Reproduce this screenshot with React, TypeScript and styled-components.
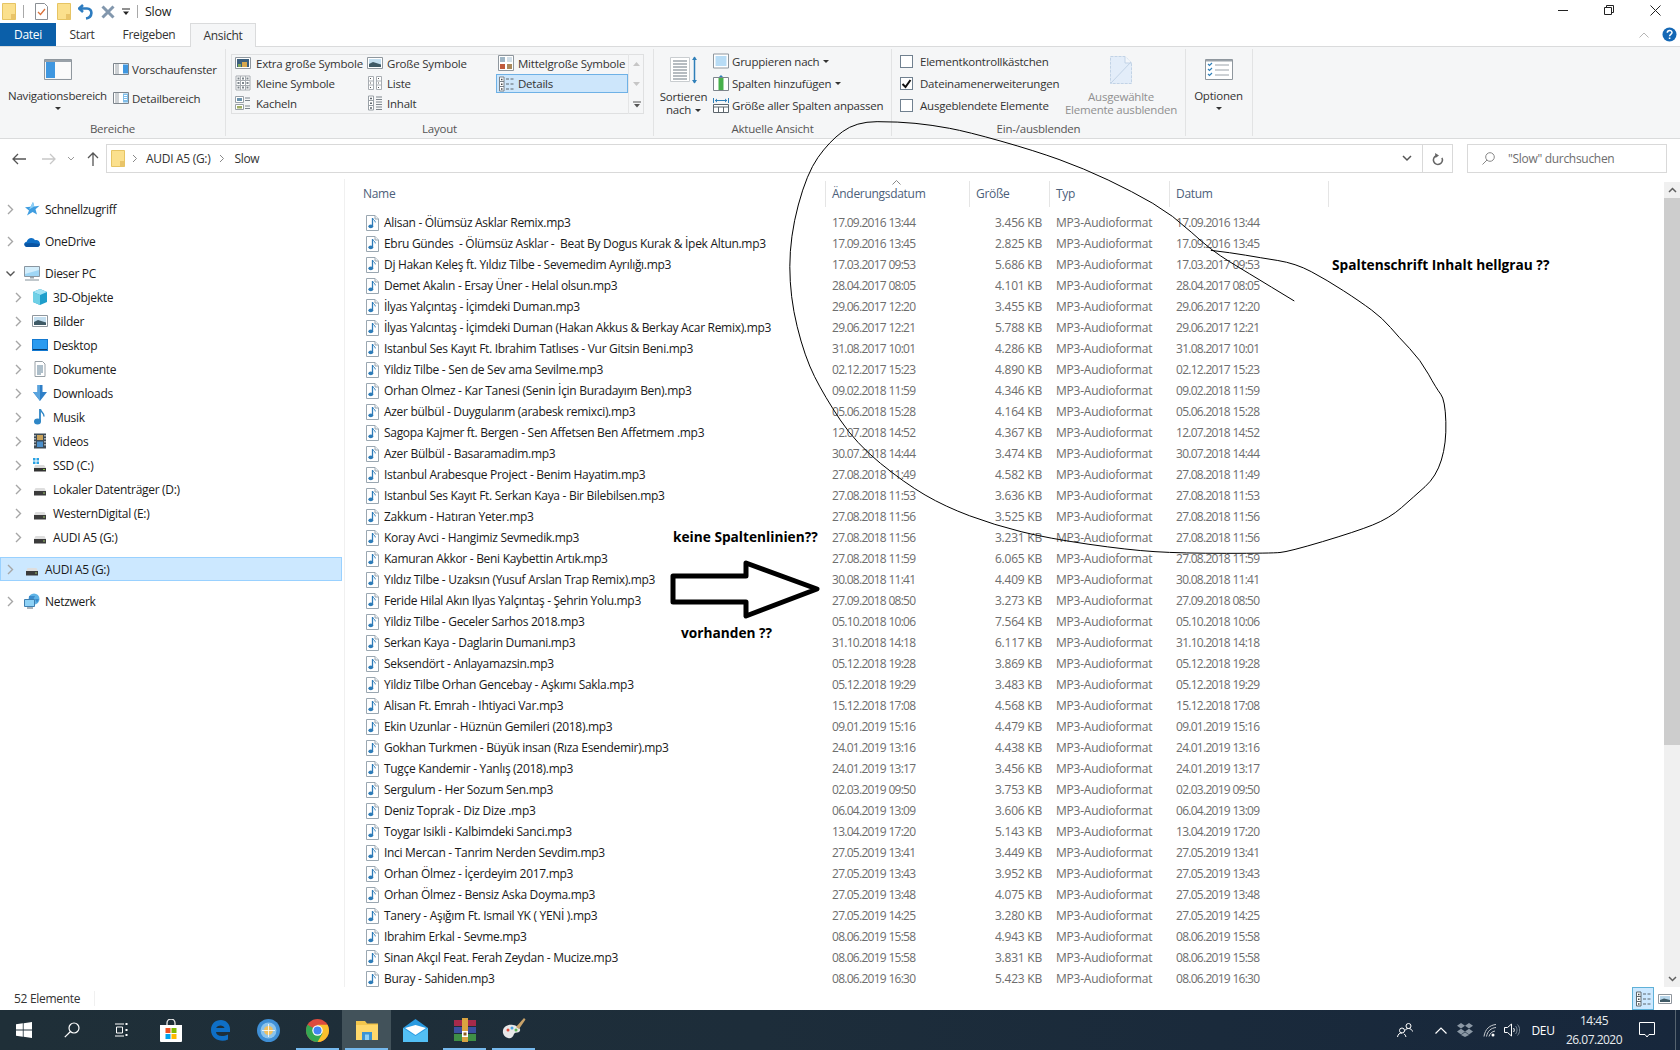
import React from "react";
import styled, { createGlobalStyle } from "styled-components";

const GlobalStyle = createGlobalStyle`
  html, body { margin: 0; padding: 0; background: #fff; }
  body { font-family: "Open Sans", "Noto Sans", sans-serif; font-size: 12px; letter-spacing: -0.3px; color: #1a1a1a; }
  * { box-sizing: border-box; }
`;

const Root = styled.div`
  position: relative; width: 1680px; height: 1050px; overflow: hidden;
  display: flex; flex-direction: column; background: #fff;
`;
const TitleBar = styled.div`display: flex; align-items: center; height: 23px; flex: none;`;
const QuickIcons = styled.div`display: flex; align-items: center; padding-left: 2px; height: 23px;`;
const QuickSep = styled.span<{ $l: number; $r: number }>`
  width: 1px; height: 13px; background: #a8a8a8; margin: 0 ${p => p.$r}px 0 ${p => p.$l}px;
`;
const QuickGap = styled.span<{ $w: number }>`width: ${p => p.$w}px; flex: none;`;
const TitleText = styled.span`font-size: 12.5px; line-height: 16px;`;
const WindowButtons = styled.div`margin-left: auto; display: flex; padding-right: 2px; margin-top: -3px;`;
const WindowButton = styled.div`width: 46px; height: 20px; display: flex; align-items: center; justify-content: center;`;

const TabRow = styled.div`display: flex; height: 23px; flex: none; align-items: stretch; position: relative; z-index: 1;`;
const FileTab = styled.div`
  width: 56px; background: #0b5fa9; color: #fff; display: flex; align-items: center; justify-content: center;
`;
const Tab = styled.div<{ $w: number; $active?: boolean }>`
  width: ${p => p.$w}px; display: flex; align-items: center; justify-content: center; color: #333;
  ${p => p.$active && `background: #f5f6f7; border: 1px solid #dadbdc; border-bottom: 0; margin-bottom: -1px;`}
`;
const TabRight = styled.div`margin-left: auto; display: flex; align-items: center; gap: 13px; padding-right: 3px;`;

const Ribbon = styled.div`
  display: flex; height: 93px; flex: none; background: #f5f6f7; font-size: 11.5px; letter-spacing: -0.22px;
  border-top: 1px solid #dadbdc; border-bottom: 1px solid #dadbdc;
`;
const Group = styled.div<{ $w: number }>`
  position: relative; width: ${p => p.$w}px; flex: none; display: flex; flex-direction: column;
  margin-top: 2px; margin-bottom: 2px;
  border-right: 1px solid #e2e3e4;
`;
const GroupBody = styled.div`flex: none; height: 73px; display: flex; align-items: flex-start;`;
const GroupLabel = styled.div`height: 14px; line-height: 14px; text-align: center; color: #555;`;
const BigCol = styled.div<{ $w: number; $top: number; $pl?: number }>`
  width: ${p => p.$w}px; flex: none; padding-top: ${p => p.$top}px; padding-left: ${p => p.$pl ?? 0}px;
  display: flex; flex-direction: column; align-items: center; white-space: nowrap; line-height: 13px;
`;
const BigText = styled.div<{ $off?: number; $muted?: boolean }>`
  margin-top: ${p => p.$off ?? 0}px; text-align: center; color: ${p => (p.$muted ? "#909090" : "#333")};
`;
const Caret = styled.span`
  display: inline-block; width: 0; height: 0; border-left: 3px solid transparent; border-right: 3px solid transparent;
  border-top: 3px solid #333; vertical-align: middle; margin-left: 4px;
`;
const BlockCaret = styled(Caret)`margin: 5px 0 0;`;
const RowCaret = styled(Caret)`margin-left: 1px;`;
const PaneCol = styled.div`display: flex; flex-direction: column; gap: 9px; padding-top: 10px; margin-left: 0;`;
const PaneRow = styled.div`display: flex; align-items: center; height: 20px; gap: 3px; white-space: nowrap; color: #333;`;
const Gallery = styled.div`
  margin: 5px 0 0 5px; width: 413px; height: 60px; padding-left: 2px;
  display: grid; grid-template-columns: 132px 131px 132px 16px; grid-auto-rows: 20px;
  box-shadow: inset 0 0 0 1px #dfe0e1;
`;
const GalleryItem = styled.div<{ $active?: boolean; $first?: boolean }>`
  display: flex; align-items: center; gap: ${p => (p.$first ? 5 : 4)}px; padding-left: 2px; padding-bottom: 2px;
  white-space: nowrap; color: #333; height: 20px;
  ${p => p.$active && `background: #cde6fb; border: 1px solid #6eb1e6; padding-left: 1px; padding-bottom: 0; height: 19px;`}
`;
const GalleryScroll = styled.div`
  grid-column: 4; grid-row: 1 / span 3; border-left: 1px solid #e4e5e6;
  display: grid; grid-template-rows: repeat(3, 20px); justify-items: center; align-items: center;
`;
const RowStack = styled.div<{ $pl?: number; $w?: number }>`
  display: flex; flex-direction: column; padding-top: 1px; padding-left: ${p => p.$pl ?? 0}px; flex: none;
  ${p => p.$w && `width: ${p.$w}px;`}
`;
const StackRow = styled.div<{ $gap: number }>`
  display: flex; align-items: center; height: 22px; gap: ${p => p.$gap}px; white-space: nowrap; color: #333;
`;
const Checkbox = styled.span`
  width: 13px; height: 13px; border: 1px solid #70808f; background: #fff; flex: none; display: flex;
  align-items: center; justify-content: center;
`;

const AddressRow = styled.div`
  height: 40px; flex: none; padding-top: 5px; display: flex; align-items: flex-start; position: relative;
`;
const NavArrows = styled.div`width: 106px; height: 29px; flex: none; display: flex; align-items: center; padding-left: 12px;`;
const AddressBox = styled.div`
  width: 1347px; height: 29px; flex: none; border: 1px solid #d9d9d9; display: flex; align-items: center; padding-left: 4px;
`;
const Crumb = styled.span`color: #333;`;
const CrumbSep = styled.span<{ $l: number; $r: number }>`display: flex; margin: 0 ${p => p.$r}px 0 ${p => p.$l}px;`;
const AddressRight = styled.div`margin-left: auto; display: flex; align-items: center; height: 100%;`;
const DropZone = styled.div`width: 30px; display: flex; justify-content: center;`;
const RefreshZone = styled.div`width: 30px; height: 100%; border-left: 1px solid #d9d9d9; display: flex; align-items: center; justify-content: center;`;
const SearchBox = styled.div`
  width: 200px; height: 29px; margin-left: 14px; flex: none; border: 1px solid #d9d9d9; display: flex; align-items: center;
  padding-left: 14px; gap: 13px; color: #6d6d6d;
`;

const Main = styled.div`flex: 1; display: flex; min-height: 0;`;
const Sidebar = styled.div`width: 345px; flex: none; border-right: 1px solid #f0f0f0; padding-top: 18px;`;
const TreeRow = styled.div<{ $level: number; $top?: number; $sel?: boolean }>`
  display: flex; align-items: center; height: 24px; margin-top: ${p => p.$top ?? 0}px; white-space: nowrap;
  padding-left: ${p => 6 + 8 * p.$level}px; width: 342px; color: #1a1a1a;
  ${p => p.$sel && `background: #cce8ff; box-shadow: inset 0 0 0 1px #99d1ff;`}
`;
const TreeChevron = styled.span`width: 9px; margin-right: 9px; display: flex; flex: none;`;
const TreeIcon = styled.span`width: 16px; height: 16px; margin-right: 5px; display: flex; flex: none;`;

const ListArea = styled.div`flex: 1; min-width: 0; padding-top: 2px; overflow: hidden;`;
const HeaderRow = styled.div`display: grid; grid-template-columns: 480px 144px 80px 120px 160px; height: 24px; margin-bottom: 7px; position: relative;`;
const HeaderCell = styled.div<{ $pl: number; $line?: boolean }>`
  position: relative; padding-left: ${p => p.$pl}px; line-height: 26px; color: #4c607a;
  ${p => p.$line && `border-left: 1px solid #e5e5e5;`}
  &:last-child { border-right: 1px solid #e5e5e5; }
`;
const SortMark = styled.span`position: absolute; left: 66px; top: -1px; display: flex;`;
const FileRow = styled.div`display: grid; grid-template-columns: 480px 144px 80px 120px 160px; height: 21px; align-items: center; white-space: pre;`;
const NameCell = styled.div`display: flex; align-items: center; padding-left: 21px; gap: 5px; color: #1a1a1a;`;
const MetaCell = styled.div<{ $right?: boolean }>`
  color: #6d6d6d; padding-left: ${p => (p.$right ? 0 : 7)}px; padding-right: ${p => (p.$right ? 7 : 0)}px;
  text-align: ${p => (p.$right ? "right" : "left")}; letter-spacing: -0.22px;
`;
const DateCell = styled(MetaCell)`letter-spacing: -0.72px;`;
const ScrollBar = styled.div`
  width: 16px; flex: none; margin-top: 3px; background: #f0f0f0; display: flex; flex-direction: column; align-items: center;
`;
const ScrollBtn = styled.div`height: 16px; display: flex; align-items: center; justify-content: center; flex: none;`;
const Thumb = styled.div`width: 16px; height: 547px; background: #cdcdcd; flex: none;`;
const Spacer = styled.div`flex: 1;`;

const StatusBar = styled.div`height: 23px; flex: none; display: flex; align-items: center; padding-left: 14px; position: relative; color: #333;`;
const StatusSep = styled.span`width: 1px; height: 15px; background: #f0f0f0; margin-left: 14px;`;
const ViewSwitch = styled.div`margin-left: auto; margin-right: 7px; display: flex; align-items: center; gap: 3px; height: 23px;`;
const ViewBtn = styled.div<{ $active?: boolean }>`
  width: ${p => (p.$active ? 22 : 16)}px; height: 23px; display: flex; align-items: center; justify-content: center;
  ${p => p.$active && `background: #cce8ff; border: 1px solid #5fb1d8;`}
`;

const Taskbar = styled.div`
  height: 40px; flex: none; display: flex; align-items: stretch; color: #fff;
  background: linear-gradient(90deg, #1f2f38 0%, #1d2d3a 45%, #17273c 100%);
`;
const TaskSlot = styled.div<{ $w: number; $open?: boolean; $active?: boolean }>`
  width: ${p => p.$w}px; flex: none; position: relative; display: flex; align-items: center; justify-content: center;
  ${p => p.$active && `background: #42525a;`}
  ${p => p.$open && `&::after { content: ""; position: absolute; left: 3px; right: 3px; bottom: 0; height: 2px; background: #76b9ed; }`}
`;
const Tray = styled.div`margin-left: auto; display: flex; align-items: center; position: relative;`;
const TrayItem = styled.div<{ $w: number; $pl?: number; $end?: boolean }>`
  width: ${p => p.$w}px; flex: none; display: flex; align-items: center; height: 40px;
  padding-left: ${p => p.$pl ?? 0}px; justify-content: ${p => (p.$end ? "flex-end" : "center")};
`;
const Clock = styled.div`width: 72px; text-align: center; line-height: 19px; font-size: 12px; letter-spacing: -0.5px; color: #e8ecef; white-space: nowrap;`;

const Overlay = styled.svg`position: absolute; left: 0; top: 0; pointer-events: none;`;
const Note = styled.div<{ $x: number; $y: number }>`
  position: absolute; left: ${p => p.$x}px; top: ${p => p.$y}px; font-weight: 700; font-size: 13.7px; line-height: 18px;
  letter-spacing: 0; color: #000; white-space: nowrap;
`;

type IP = { w?: number; h?: number; children?: React.ReactNode };
const I = ({ w = 16, h = 16, children }: IP) => (
  <svg width={w} height={h} viewBox={`0 0 ${w} ${h}`} style={{ flex: "none", display: "block" }}>{children}</svg>
);

const FolderSmall = () => (
  <I w={14} h={17}><path d="M.5.5h13v16H.5z" fill="#fbe08d" stroke="#e6c463" /><path d="M9 11h4.5v5.5H9z" fill="#e9c469" /></I>
);
const MusicFile = () => (
  <I w={13} h={16}>
    <path d="M.5.5h8.5l3.5 3.5v11.5H.5z" fill="#fff" stroke="#9aa7b1" />
    <path d="M9 .5V4h3.5" fill="#eef2f5" stroke="#9aa7b1" />
    <path d="M6.5 3v8" stroke="#2e7cb8" strokeWidth="1.3" />
    <path d="M6.7 3.4c.6 1.6 2.6 2 2.6 4" stroke="#2e7cb8" fill="none" />
    <ellipse cx="4.8" cy="11.3" rx="2.4" ry="1.9" fill="#2e7cb8" />
  </I>
);
const ChevR = ({ c = "#a6a6a6" }: { c?: string }) => (
  <I w={9} h={11}><path d="M2 1l4.5 4.5L2 10" fill="none" stroke={c} strokeWidth="1.4" /></I>
);
const ChevD = () => <I w={10} h={9}><path d="M1 2l4 4 4-4" fill="none" stroke="#555" strokeWidth="1.5" /></I>;

const S = {
  star: <I><path d="M9 1l1.3 4.4 5.2-.6-4 3.4 1.5 5.3-4.4-2.6-5.6 3.5 2-5L1 6.3l5.6-.6z" fill="#3f9de0" /><path d="M9 1l1.3 4.4-4.7 2.8-.6 0L6.6 5.7z" fill="#8fd0f7" /></I>,
  cloud: <I><path d="M3 14c-3.5 0-3.6-5-.3-5.3C3.5 4.800 9 3.500 11 7.200c2.800-.7 5 1.300 4.900 3.500 0 2-1.300 3.300-3 3.300z" fill="#0f6fc6" /><path d="M3 14c-2-.5-2.800-2-2.500-3.500L8 10l7.900 1c0 2-1.300 3-3 3z" fill="#0a54a2" /></I>,
  pc: <I><path d="M.5 1.500h15v10H.5z" fill="#9fd6f5" stroke="#8a96a0" /><path d="M1 2h14v3L1 9z" fill="#d3eefc" /><path d="M6 12h4v1.500H6z" fill="#9aa6ae" /><path d="M1 15h14" stroke="#a7b0b7" strokeWidth="1.400" /></I>,
  cube: <I><path d="M8 0l7 3v10l-7 3-7-3V3z" fill="#1e9ecb" /><path d="M8 0l7 3-7 3-7-3z" fill="#a2e3f4" /><path d="M1 3l7 3v10l-7-3z" fill="#6fd0e6" /></I>,
  pic: <I><path d="M.5 2.500h15v11H.5z" fill="#fff" stroke="#8f979e" /><path d="M2 4h12v8H2z" fill="#c4dff0" /><path d="M2 9l4-2 8 2.500V12H2z" fill="#3f5a66" /></I>,
  desk: <I><path d="M0 2h16v12H0z" fill="#1379d0" /><path d="M1 3h14v9.500H1z" fill="#2b9bf0" /><path d="M1 12.500h14" stroke="#0a3c6e" /></I>,
  doc: <I><path d="M3 .5h7.500L13 3v12.500H3z" fill="#fff" stroke="#98a0a6" /><path d="M5 5h6M5 7h6M5 9h6M5 11h6M5 13h4" stroke="#5d7f95" /></I>,
  dl: <I><path d="M5.500 0h5v7H15l-7 9-7-9h4.500z" fill="#2f7fc7" /><path d="M5.500 0h2.500v16l-7-9h4.500z" fill="#5aa4de" /></I>,
  music: <I><path d="M8 0v12" stroke="#2e86c6" strokeWidth="1.800" /><path d="M8.500.5c.6 3 4 3.400 3.500 7" fill="none" stroke="#2e86c6" strokeWidth="1.400" /><ellipse cx="5.500" cy="12.500" rx="3.500" ry="3" fill="#2e86c6" /></I>,
  film: <I><path d="M2 .5h12v15H2z" fill="#3d4a55" /><path d="M5 2h6v5H5z" fill="#c9a25a" /><path d="M5 8.500h6V14H5z" fill="#4b8fcb" /><path d="M3 2v12M13 2v12" stroke="#dfe4e8" strokeDasharray="1.500 1.500" strokeWidth="1.300" /></I>,
  sys: <I><path d="M1 1h2.500v2.500H1zM4.500 1H7v2.500H4.500zM1 4.500h2.500V7H1zM4.500 4.500H7V7H4.500z" fill="#2aa2e3" /><path d="M2 11l1-3h9l2 3z" fill="#dcdcdc" /><path d="M2 11h12v3.500H2z" fill="#333" /><path d="M11 12h2v1h-2z" fill="#7dc242" /></I>,
  drive: <I><path d="M2 10l1.500-3h9L14 10z" fill="#dedede" /><path d="M2 10h12v4.500H2z" fill="#3b3b3b" /><path d="M11 11.500h2v1h-2z" fill="#9cc46a" /></I>,
  net: <I><circle cx="10" cy="6" r="5.500" fill="#5fb3e6" /><path d="M5 3h6l-2 4H5zM11 6h4l-2 4z" fill="#3b8ccc" /><path d="M.5 6.500h10v7H.5z" fill="#8fd2f6" stroke="#3f7fb0" /><path d="M3 15h6" stroke="#8b99a3" strokeWidth="1.500" /></I>,
};

const treeItems = [
  { l: 0, t: "Schnellzugriff", i: S.star },
  { l: 0, top: 8, t: "OneDrive", i: S.cloud },
  { l: 0, top: 8, t: "Dieser PC", i: S.pc, open: true },
  { l: 1, t: "3D-Objekte", i: S.cube },
  { l: 1, t: "Bilder", i: S.pic },
  { l: 1, t: "Desktop", i: S.desk },
  { l: 1, t: "Dokumente", i: S.doc },
  { l: 1, t: "Downloads", i: S.dl },
  { l: 1, t: "Musik", i: S.music },
  { l: 1, t: "Videos", i: S.film },
  { l: 1, t: "SSD (C:)", i: S.sys },
  { l: 1, t: "Lokaler Datenträger (D:)", i: S.drive },
  { l: 1, t: "WesternDigital (E:)", i: S.drive },
  { l: 1, t: "AUDI A5 (G:)", i: S.drive },
  { l: 0, top: 8, t: "AUDI A5 (G:)", i: S.drive, sel: true },
  { l: 0, top: 8, t: "Netzwerk", i: S.net },
];

const files: [string, string, string][] = [
  ["Alisan - Ölümsüz Asklar Remix.mp3", "17.09.2016 13:44", "3.456"],
  ["Ebru Gündes  - Ölümsüz Asklar -  Beat By Dogus Kurak & İpek Altun.mp3", "17.09.2016 13:45", "2.825"],
  ["Dj Hakan Keleş ft. Yıldız Tilbe - Sevemedim Ayrılığı.mp3", "17.03.2017 09:53", "5.686"],
  ["Demet Akalın - Ersay Üner - Helal olsun.mp3", "28.04.2017 08:05", "4.101"],
  ["İlyas Yalçıntaş - İçimdeki Duman.mp3", "29.06.2017 12:20", "3.455"],
  ["İlyas Yalcıntaş - İçimdeki Duman (Hakan Akkus & Berkay Acar Remix).mp3", "29.06.2017 12:21", "5.788"],
  ["Istanbul Ses Kayıt Ft. Ibrahim Tatlıses - Vur Gitsin Beni.mp3", "31.08.2017 10:01", "4.286"],
  ["Yildiz Tilbe - Sen de Sev ama Sevilme.mp3", "02.12.2017 15:23", "4.890"],
  ["Orhan Olmez - Kar Tanesi (Senin İçin Buradayım Ben).mp3", "09.02.2018 11:59", "4.346"],
  ["Azer bülbül - Duygularım (arabesk remixci).mp3", "05.06.2018 15:28", "4.164"],
  ["Sagopa Kajmer ft. Bergen - Sen Affetsen Ben Affetmem .mp3", "12.07.2018 14:52", "4.367"],
  ["Azer Bülbül - Basaramadim.mp3", "30.07.2018 14:44", "3.474"],
  ["Istanbul Arabesque Project - Benim Hayatim.mp3", "27.08.2018 11:49", "4.582"],
  ["Istanbul Ses Kayıt Ft. Serkan Kaya - Bir Bilebilsen.mp3", "27.08.2018 11:53", "3.636"],
  ["Zakkum - Hatıran Yeter.mp3", "27.08.2018 11:56", "3.525"],
  ["Koray Avci - Hangimiz Sevmedik.mp3", "27.08.2018 11:56", "3.231"],
  ["Kamuran Akkor - Beni Kaybettin Artık.mp3", "27.08.2018 11:59", "6.065"],
  ["Yıldız Tilbe - Uzaksın (Yusuf Arslan Trap Remix).mp3", "30.08.2018 11:41", "4.409"],
  ["Feride Hilal Akın Ilyas Yalçıntaş - Şehrin Yolu.mp3", "27.09.2018 08:50", "3.273"],
  ["Yildiz Tilbe - Geceler Sarhos 2018.mp3", "05.10.2018 10:06", "7.564"],
  ["Serkan Kaya - Daglarin Dumani.mp3", "31.10.2018 14:18", "6.117"],
  ["Seksendört - Anlayamazsin.mp3", "05.12.2018 19:28", "3.869"],
  ["Yildiz Tilbe Orhan Gencebay - Aşkımı Sakla.mp3", "05.12.2018 19:29", "3.483"],
  ["Alisan Ft. Emrah - Ihtiyaci Var.mp3", "15.12.2018 17:08", "4.568"],
  ["Ekin Uzunlar - Hüznün Gemileri (2018).mp3", "09.01.2019 15:16", "4.479"],
  ["Gokhan Turkmen - Büyük insan (Rıza Esendemir).mp3", "24.01.2019 13:16", "4.438"],
  ["Tugçe Kandemir - Yanlış (2018).mp3", "24.01.2019 13:17", "3.456"],
  ["Sergulum - Her Sozum Sen.mp3", "02.03.2019 09:50", "3.753"],
  ["Deniz Toprak - Diz Dize .mp3", "06.04.2019 13:09", "3.606"],
  ["Toygar Isikli - Kalbimdeki Sanci.mp3", "13.04.2019 17:20", "5.143"],
  ["Inci Mercan - Tanrim Nerden Sevdim.mp3", "27.05.2019 13:41", "3.449"],
  ["Orhan Ölmez - İçerdeyim 2017.mp3", "27.05.2019 13:43", "3.952"],
  ["Orhan Ölmez - Bensiz Aska Doyma.mp3", "27.05.2019 13:48", "4.075"],
  ["Tanery - Aşığım Ft. Ismail YK ( YENİ ).mp3", "27.05.2019 14:25", "3.280"],
  ["Ibrahim Erkal - Sevme.mp3", "08.06.2019 15:58", "4.943"],
  ["Sinan Akçıl Feat. Ferah Zeydan - Mucize.mp3", "08.06.2019 15:58", "3.831"],
  ["Buray - Sahiden.mp3", "08.06.2019 16:30", "5.423"],
];

const G = {
  xl: <I><path d="M.5 2.500h15v11H.5z" fill="#fff" stroke="#8f979e" /><path d="M2 4h12v8H2z" fill="#3c5f7c" /><path d="M7 7h5v5H7z" fill="#d7a84e" /><path d="M3 9h3v3H3z" fill="#7fa65a" /></I>,
  lg: <I><path d="M.5 2.500h15v11H.5z" fill="#fff" stroke="#8f979e" /><path d="M2 4h12v8H2z" fill="#c4dff0" /><path d="M2 9l4-2 8 2.500V12H2z" fill="#3f5a66" /></I>,
  md: <I><path d="M.5.500h15v15H.5z" fill="#fff" stroke="#8f979e" /><path d="M2 2h5v5H2z" fill="#9fb6c6" /><path d="M9 2h5v5H9z" fill="#d2dfe8" /><path d="M2 9h5v5H2z" fill="#c05a3c" /><path d="M9 9h5v5H9z" fill="#aa8a5c" /></I>,
  sm: <I><path d="M1 1h14v14H1z" fill="#fff" stroke="#a8adb2" /><path d="M5.500 1v14M10.500 1v14M1 5.500h14M1 10.500h14" stroke="#a8adb2" /><path d="M2.500 2.500h2v2h-2zM7 2.500h2v2H7zM11.500 2.500h2v2h-2zM2.500 7h2v2h-2zM7 7h2v2H7zM11.500 7h2v2h-2zM2.500 11.500h2v2h-2zM7 11.500h2v2H7zM11.500 11.500h2v2h-2z" fill="#7d858c" /></I>,
  tile: <I><path d="M.5 1.500h8v6h-8zM.5 9.500h8v5h-8z" fill="#fff" stroke="#99a0a6" /><path d="M2 3h5v3H2z" fill="#6b93ad" /><path d="M2 11h5v2.500H2z" fill="#9fae63" /><path d="M10 3h5M10 5.500h5M10 11h5M10 13.500h5" stroke="#7d858c" /></I>,
  list: <I><path d="M1.500 1.500h5v13h-5zM9.500 1.500h5v13h-5z" fill="#fff" stroke="#a8adb2" /><path d="M1.500 6h5M1.500 10h5M9.500 6h5M9.500 10h5" stroke="#a8adb2" /><path d="M3 3h1v1H3zM3 7.500h1v1H3zM3 12h1v1H3zM11 3h1v1h-1zM11 7.500h1v1h-1zM11 12h1v1h-1z" fill="#555" /></I>,
  cont: <I><path d="M1.500 1h5v14h-5z" fill="#fff" stroke="#99a0a6" /><path d="M1.500 5.500h5M1.500 10.500h5" stroke="#99a0a6" /><path d="M3 2.800h2v1.500H3zM3 7.500h2v1.500H3zM3 12.200h2v1.500H3z" fill="#5d666d" /><path d="M9 2h6M9 4.500h6M9 7h6M9 9.500h6M9 12h6M9 14.500h6" stroke="#7d858c" /></I>,
  det: <I><path d="M1.500 1h4.500v14H1.500z" fill="#fff" stroke="#788189" /><path d="M1.500 5.500H6M1.500 10.500H6" stroke="#788189" /><path d="M3 2.800h1.500v1.500H3zM3 7.500h1.500v1.500H3zM3 12.200h1.500v1.500H3z" fill="#444" /><path d="M8 3h3M12.500 3h3M8 8h3M12.500 8h3M8 13h3M12.500 13h3" stroke="#5d666d" /></I>,
};

const DetailsMini = () => (
  <I w={16} h={16}><path d="M1.500 1h4.500v14H1.500z" fill="#fff" stroke="#5d666d" /><path d="M1.500 5.500H6M1.500 10.500H6" stroke="#5d666d" /><path d="M3 2.800h1.500v1.500H3zM3 7.500h1.500v1.500H3zM3 12.200h1.500v1.500H3z" fill="#444" /><path d="M8 3h3M12.500 3h3M8 8h3M12.500 8h3M8 13h3M12.500 13h3" stroke="#5d666d" /></I>
);

const circlePoints: [number, number][] = [
  [965, 421], [1010, 428], [1075, 443], [1155, 460], [1225, 510], [1300, 575], [1350, 625], [1385, 680], [1435, 750],
  [1470, 835], [1490, 870], [1493, 1000], [1470, 1100], [1420, 1160], [1365, 1225], [1290, 1265], [1140, 1325],
  [1100, 1330], [900, 1330], [780, 1320], [600, 1285], [480, 1245], [370, 1190], [280, 1120], [170, 1000], [100, 860],
  [55, 740], [22, 560], [22, 380], [60, 190], [110, 95], [170, 35], [265, 35], [340, 45], [420, 65], [570, 122],
  [680, 175], [790, 245], [880, 315], [965, 421], [1050, 490], [1152, 573],
];
const circlePath = circlePoints.reduce((d, p, i, a) => {
  if (i === 0) return `M${p[0]} ${p[1]}`;
  if (i === a.length - 1) return `${d}L${p[0]} ${p[1]}`;
  const n = a[i + 1];
  return `${d}Q${p[0]} ${p[1]} ${(p[0] + n[0]) / 2} ${(p[1] + n[1]) / 2}`;
}, "");

export default function App() {
  return (
    <Root>
      <GlobalStyle />
      <TitleBar>
        <QuickIcons>
          <FolderSmall />
          <QuickSep $l={7} $r={11} />
          <I w={13} h={17}><path d="M.5.500h9l3 3v13H.5z" fill="#fff" stroke="#8a8f94" /><path d="M3 9l2.500 2.500L10 6" fill="none" stroke="#d9713a" strokeWidth="1.300" /></I>
          <QuickGap $w={9} />
          <FolderSmall />
          <QuickGap $w={7} />
          <I w={15} h={16}><path d="M5 1L1 4.500 5 8M1.500 4.500h7.500c6 0 6 9 -1 10" fill="none" stroke="#2d7cc0" strokeWidth="2.600" /></I>
          <QuickGap $w={8} />
          <I w={14} h={14}><path d="M1.500 1.500l11 11M12.500 1.500l-11 11" stroke="#8297ad" strokeWidth="3" /></I>
          <QuickGap $w={7} />
          <I w={8} h={8}><path d="M0 1h8" stroke="#222" /><path d="M1 3.500h6L4 7z" fill="#222" /></I>
          <QuickSep $l={7} $r={7} />
        </QuickIcons>
        <TitleText>Slow</TitleText>
        <WindowButtons>
          <WindowButton><I w={10} h={10}><path d="M0 5.500h10" stroke="#222" /></I></WindowButton>
          <WindowButton><I w={10} h={10}><path d="M2.500 2.500V.5h7v7h-2M.5 2.500h7v7h-7z" fill="none" stroke="#222" /></I></WindowButton>
          <WindowButton><I w={11} h={11}><path d="M.5.500l10 10M10.500.500l-10 10" stroke="#222" /></I></WindowButton>
        </WindowButtons>
      </TitleBar>

      <TabRow>
        <FileTab>Datei</FileTab>
        <Tab $w={52}>Start</Tab>
        <Tab $w={82}>Freigeben</Tab>
        <Tab $w={66} $active>Ansicht</Tab>
        <TabRight>
          <I w={10} h={6}><path d="M.5 5.500L5 1l4.500 4.500" fill="none" stroke="#b5b5b5" /></I>
          <I w={15} h={15}><circle cx="7.500" cy="7.500" r="7" fill="#1568b5" /><path d="M5.300 5.800c0-3 4.700-3 4.700-.2 0 1.800-2.400 1.800-2.400 3.600" fill="none" stroke="#fff" strokeWidth="1.500" /><path d="M6.800 10.500h1.600v1.500H6.800z" fill="#fff" /></I>
        </TabRight>
      </TabRow>

      <Ribbon>
        <Group $w={226}>
          <GroupBody>
            <BigCol $w={113} $top={10} $pl={2}>
              <I w={28} h={21}><path d="M.5.500h27v20H.5z" fill="#f7f7f7" stroke="#8f979e" /><path d="M1 1h26v2H1z" fill="#9aa2a9" /><path d="M2 3h9v16H2z" fill="#3f97e0" /><path d="M11 3h15v16H11z" fill="#fbfbfb" /></I>
              <BigText $off={9}>Navigationsbereich</BigText>
              <BlockCaret />
            </BigCol>
            <PaneCol>
              <PaneRow><I w={16} h={12}><path d="M.5.500h15v11H.5z" fill="#fff" stroke="#7d858c" /><path d="M5 1v10M3 1v10" stroke="#9aa2a9" /><path d="M10 1.500h5v9h-5z" fill="#3f97e0" /></I>Vorschaufenster</PaneRow>
              <PaneRow><I w={16} h={12}><path d="M.5.500h15v11H.5z" fill="#fff" stroke="#7d858c" /><path d="M5 1v10M3 1v10" stroke="#9aa2a9" /><path d="M10 1.500h5v9h-5z" fill="#7fbde9" /><path d="M11 3.500h3M11 5.500h3M11 7.500h3" stroke="#fff" /></I>Detailbereich</PaneRow>
            </PaneCol>
          </GroupBody>
          <GroupLabel>Bereiche</GroupLabel>
        </Group>

        <Group $w={428}>
          <GroupBody>
            <Gallery>
              <GalleryItem $first>{G.xl}Extra große Symbole</GalleryItem>
              <GalleryItem>{G.lg}Große Symbole</GalleryItem>
              <GalleryItem>{G.md}Mittelgroße Symbole</GalleryItem>
              <GalleryScroll>
                <I w={7} h={4}><path d="M3.500 0L7 4H0z" fill="#c6c6c6" /></I>
                <I w={7} h={4}><path d="M3.500 4L7 0H0z" fill="#c6c6c6" /></I>
                <I w={8} h={7}><path d="M0 1h8" stroke="#555" /><path d="M1 3h6L4 6.500z" fill="#555" /></I>
              </GalleryScroll>
              <GalleryItem $first>{G.sm}Kleine Symbole</GalleryItem>
              <GalleryItem>{G.list}Liste</GalleryItem>
              <GalleryItem $active>{G.det}Details</GalleryItem>
              <GalleryItem $first>{G.tile}Kacheln</GalleryItem>
              <GalleryItem>{G.cont}Inhalt</GalleryItem>
            </Gallery>
          </GroupBody>
          <GroupLabel>Layout</GroupLabel>
        </Group>

        <Group $w={238}>
          <GroupBody>
            <BigCol $w={59} $top={7}>
              <I w={28} h={28}><path d="M.5 1.500h19v24H.5z" fill="#fff" stroke="#c9cdd0" /><path d="M3 5h14M3 8h14M3 11h14M3 14h14M3 17h14M3 20h14M3 23h14" stroke="#9ea7ad" strokeWidth="1.500" /><path d="M24.500 1v26" stroke="#2f7fb8" strokeWidth="1.500" /><path d="M22 4l2.500-3.500L27 4zM22 24l2.500 3.500L27 24z" fill="#2f7fb8" /></I>
              <BigText $off={6}>Sortieren<br />nach<Caret /></BigText>
            </BigCol>
            <RowStack>
              <StackRow $gap={3}><I w={16} h={16}><path d="M.5 1h15v14H.5z" fill="#fff" stroke="#8f979e" /><path d="M2.500 3h11v10h-11z" fill="#b8dcf5" /></I>Gruppieren nach<RowCaret /></StackRow>
              <StackRow $gap={3}><I w={16} h={16}><path d="M.5 2.500h15v13H.5z" fill="#fff" stroke="#7d858c" /><path d="M5.500 3h5v12h-5z" fill="#47b04b" /><path d="M8 0l2 2H6z" fill="#2f7fb8" /></I>Spalten hinzufügen<RowCaret /></StackRow>
              <StackRow $gap={3}><I w={16} h={16}><path d="M.5 7.500h15v8H.5z" fill="#fff" stroke="#5d666d" /><path d="M.5 10h15M5.500 10v5.500M10.500 10v5.500" stroke="#5d666d" /><path d="M2 3.500h12" stroke="#2f7fb8" /><path d="M.5 1v5M15.500 1v5" stroke="#2f7fb8" /><path d="M2 3.500L4 1.500v4zM14 3.500l-2-2v4z" fill="#2f7fb8" /></I>Größe aller Spalten anpassen</StackRow>
            </RowStack>
          </GroupBody>
          <GroupLabel>Aktuelle Ansicht</GroupLabel>
        </Group>

        <Group $w={294}>
          <GroupBody>
            <RowStack $pl={8} $w={169}>
              <StackRow $gap={7}><Checkbox />Elementkontrollkästchen</StackRow>
              <StackRow $gap={7}><Checkbox><I w={11} h={11}><path d="M1.500 6l3 3L9.500 2" fill="none" stroke="#111" strokeWidth="2" /></I></Checkbox>Dateinamenerweiterungen</StackRow>
              <StackRow $gap={7}><Checkbox />Ausgeblendete Elemente</StackRow>
            </RowStack>
            <BigCol $w={120} $top={7}>
              <I w={22} h={28}><path d="M.5.500H15L21.500 7v20.500H.5z" fill="#e3edf9" stroke="#c2d3e6" strokeDasharray="3 1" /><path d="M15 .5V7h6.500" fill="#f3f6fa" stroke="#c2d3e6" /><path d="M1 27L21 6" stroke="#c2d3e6" /></I>
              <BigText $off={6} $muted>Ausgewählte<br />Elemente ausblenden</BigText>
            </BigCol>
          </GroupBody>
          <GroupLabel>Ein-/ausblenden</GroupLabel>
        </Group>

        <Group $w={67}>
          <GroupBody>
            <BigCol $w={65} $top={10}>
              <I w={28} h={21}><path d="M.5.500h27v20H.5z" fill="#fff" stroke="#8f979e" /><path d="M1 1h26v1.500H1z" fill="#9aa2a9" /><path d="M10 6h14M10 11h14M10 16h14" stroke="#9aa2a9" /><path d="M3 5l1.500 1.500L7 4M3 10l1.500 1.500L7 9M3 15l1.500 1.500L7 14" fill="none" stroke="#2f7fb8" strokeWidth="1.200" /></I>
              <BigText $off={9}>Optionen</BigText>
              <BlockCaret />
            </BigCol>
          </GroupBody>
        </Group>
      </Ribbon>

      <AddressRow>
        <NavArrows>
          <I w={14} h={12}><path d="M6 1L1 6l5 5M1 6h13" fill="none" stroke="#555" strokeWidth="1.300" /></I>
          <QuickGap $w={16} />
          <I w={14} h={12}><path d="M8 1l5 5-5 5M13 6H0" fill="none" stroke="#c8c8c8" strokeWidth="1.300" /></I>
          <QuickGap $w={11} />
          <I w={8} h={6}><path d="M1 1l3 3 3-3" fill="none" stroke="#999" /></I>
          <QuickGap $w={12} />
          <I w={12} h={14}><path d="M1 6l5-5 5 5M6 1v13" fill="none" stroke="#555" strokeWidth="1.300" /></I>
        </NavArrows>
        <AddressBox>
          <FolderSmall />
          <CrumbSep $l={7} $r={8}><I w={6} h={9}><path d="M1 1l3.500 3.500L1 8" fill="none" stroke="#888" /></I></CrumbSep>
          <Crumb>AUDI A5 (G:)</Crumb>
          <CrumbSep $l={9} $r={9}><I w={6} h={9}><path d="M1 1l3.500 3.500L1 8" fill="none" stroke="#888" /></I></CrumbSep>
          <Crumb>Slow</Crumb>
          <AddressRight>
            <DropZone><ChevD /></DropZone>
            <RefreshZone>
              <I w={12} h={14}><path d="M3 4.500a4.500 4.500 0 1 0 6 .2" transform="rotate(20 6 8)" fill="none" stroke="#666" strokeWidth="1.500" /><path d="M3 1l4 2.500-3.500 2.500z" fill="#666" /></I>
            </RefreshZone>
          </AddressRight>
        </AddressBox>
        <SearchBox>
          <I w={13} h={13}><circle cx="8" cy="5" r="4.300" fill="none" stroke="#888" /><path d="M5 8l-4.500 4.500" stroke="#888" /></I>
          "Slow" durchsuchen
        </SearchBox>
      </AddressRow>

      <Main>
        <Sidebar>
          {treeItems.map((r, i) => (
            <TreeRow key={i} $level={r.l} $top={r.top} $sel={r.sel}>
              <TreeChevron>{r.open ? <I w={9} h={11}><path d="M.5 3.500L4.500 7.500l4-4" fill="none" stroke="#555" strokeWidth="1.400" /></I> : <ChevR />}</TreeChevron>
              <TreeIcon>{r.i}</TreeIcon>
              {r.t}
            </TreeRow>
          ))}
        </Sidebar>
        <ListArea>
          <HeaderRow>
            <HeaderCell $pl={18}>Name</HeaderCell>
            <HeaderCell $pl={6} $line>
              <SortMark><I w={9} h={5}><path d="M.5 4.500L4.500.5l4 4" fill="none" stroke="#888" /></I></SortMark>
              Änderungsdatum
            </HeaderCell>
            <HeaderCell $pl={6} $line>Größe</HeaderCell>
            <HeaderCell $pl={6} $line>Typ</HeaderCell>
            <HeaderCell $pl={6} $line>Datum</HeaderCell>
          </HeaderRow>
          {files.map((f, i) => (
            <FileRow key={i}>
              <NameCell><MusicFile />{f[0]}</NameCell>
              <DateCell>{f[1]}</DateCell>
              <MetaCell $right>{f[2]} KB</MetaCell>
              <MetaCell>MP3-Audioformat</MetaCell>
              <DateCell>{f[1]}</DateCell>
            </FileRow>
          ))}
        </ListArea>
        <ScrollBar>
          <ScrollBtn><I w={9} h={6}><path d="M1 5l3.500-3.500L8 5" fill="none" stroke="#606060" strokeWidth="1.500" /></I></ScrollBtn>
          <Thumb />
          <Spacer />
          <ScrollBtn><I w={9} h={6}><path d="M1 1l3.500 3.500L8 1" fill="none" stroke="#606060" strokeWidth="1.500" /></I></ScrollBtn>
        </ScrollBar>
      </Main>

      <StatusBar>
        52 Elemente
        <StatusSep />
        <ViewSwitch>
          <ViewBtn $active><DetailsMini /></ViewBtn>
          <ViewBtn><I w={14} h={10}><path d="M.5.500h13v9H.5z" fill="#fff" stroke="#8f979e" /><path d="M2 2h10v6H2z" fill="#b8d6ea" /><path d="M2 6l4-1.500L12 6v2H2z" fill="#3f5a66" /></I></ViewBtn>
        </ViewSwitch>
      </StatusBar>

      <Taskbar>
        <TaskSlot $w={48}>
          <I w={16} h={16}><path d="M0 2.300L6.800 1.300V7.600H0zM7.600 1.200L16 0V7.600H7.600zM0 8.400H6.800V14.700L0 13.700zM7.600 8.400H16V16L7.600 14.800z" fill="#fff" /></I>
        </TaskSlot>
        <TaskSlot $w={48}>
          <I w={16} h={16}><circle cx="10" cy="6" r="5" fill="none" stroke="#fff" strokeWidth="1.200" /><path d="M6.500 9.500L.8 15.200" stroke="#fff" strokeWidth="1.200" /></I>
        </TaskSlot>
        <TaskSlot $w={50}>
          <I w={16} h={16}><path d="M2 2h9M2 14h9M3.500 5h6v6h-6z" fill="none" stroke="#fff" /><path d="M13.500 1v2M13.500 7v2M13.500 12v2" stroke="#fff" strokeWidth="2" /></I>
        </TaskSlot>
        <TaskSlot $w={49}>
          <I w={24} h={23}><path d="M8 7V4a4 4 0 0 1 8 0v3" fill="none" stroke="#e8e8e8" strokeWidth="1.300" /><path d="M1 6h22v16a1 1 0 0 1-1 1H2a1 1 0 0 1-1-1z" fill="#fff" /><path d="M6.500 9h5v5h-5z" fill="#f25022" /><path d="M12.500 9h5v5h-5z" fill="#7fba00" /><path d="M6.500 15h5v5h-5z" fill="#00a4ef" /><path d="M12.500 15h5v5h-5z" fill="#ffb900" /></I>
        </TaskSlot>
        <TaskSlot $w={49}>
          <I w={20} h={22}><path d="M1 11C1 5 5 1 11 1c5 0 9 4 9 9v3H6c.3 4 6 5.500 12 2.500v5C11 24 1 20 1 11zM6.200 9H14.500C14 5.500 7 5.500 6.200 9z" fill="#0f6fc6" /></I>
        </TaskSlot>
        <TaskSlot $w={49}>
          <I w={23} h={23}><circle cx="11.500" cy="11.500" r="11.500" fill="#3f8fd6" /><circle cx="11.500" cy="11.500" r="8" fill="#8cc4ec" /><circle cx="11.500" cy="11.500" r="4.500" fill="#f0c060" /><path d="M11.500 5v13M5 11.500h13" stroke="#fff" strokeWidth=".8" /></I>
        </TaskSlot>
        <TaskSlot $w={49} $open>
          <I w={23} h={23}>
            <circle cx="11.500" cy="11.500" r="11.500" fill="#dd4b3e" />
            <path d="M11.500 23A11.500 11.500 0 0 0 21.500 5.800H11.500z" fill="#fbc02d" />
            <path d="M1.500 5.800a11.500 11.500 0 0 0 10 17.200l5-8.600z" fill="#34a853" />
            <circle cx="11.500" cy="11.500" r="5.200" fill="#fff" /><circle cx="11.500" cy="11.500" r="4" fill="#4285f4" />
          </I>
        </TaskSlot>
        <TaskSlot $w={49} $open $active>
          <I w={22} h={20}><path d="M0 1h9l2 2.500h11V20H0z" fill="#f3c64d" /><path d="M0 5h22v15H0z" fill="#ffd86b" /><path d="M6 12h10v8H6z" fill="#3b93d3" /><path d="M9 14.500h4V20H9z" fill="#8ed0f5" /></I>
        </TaskSlot>
        <TaskSlot $w={49}>
          <I w={25} h={23}><path d="M0 9L12.500 0 25 9v14H0z" fill="#2a9ae0" /><path d="M0 9l12.500 8L25 9v14H0z" fill="#53c0f5" /><path d="M2 9l10.500-3L23 9l-10.500 7z" fill="#fff" /></I>
        </TaskSlot>
        <TaskSlot $w={49} $open>
          <I w={24} h={24}><path d="M1 2h22v6H1z" fill="#a62a4a" /><path d="M1 9h22v6H1z" fill="#3c4fa0" /><path d="M1 16h22v7H1z" fill="#3f8f46" /><path d="M9 0h6v24H9z" fill="#d9a441" /><path d="M9 13h6v6H9z" fill="#fff" /><path d="M10.500 14.500h3v3h-3z" fill="#8a5a20" /></I>
        </TaskSlot>
        <TaskSlot $w={49} $open>
          <I w={24} h={24}><path d="M1 15C0 9 6 6 11 7c6 1 9 5 6 7-2 1-4 0-5 2-1 3-3 5-6 4-3-.5-4.500-3-5-5z" fill="#e8e8e8" /><circle cx="6" cy="12" r="1.500" fill="#e04a3a" /><circle cx="10" cy="10" r="1.500" fill="#4aa3df" /><circle cx="14" cy="12" r="1.500" fill="#5bb450" /><path d="M14 9L22 0l1.500 1.500L17 11z" fill="#c9a36a" /></I>
        </TaskSlot>
        <Tray>
          <TrayItem $w={50}><I w={16} h={16}><circle cx="5" cy="8.500" r="2.500" fill="none" stroke="#fff" /><path d="M.5 15c.5-3 2-4 4.500-4M9 15c-.3-1.500-1-2.500-2-3.200" fill="none" stroke="#fff" /><circle cx="11.500" cy="4" r="2.500" fill="none" stroke="#fff" /><path d="M7.500 9.500C8 7.500 9.500 6.500 11.500 6.500s3.500 1 4 3" fill="none" stroke="#fff" /></I></TrayItem>
          <TrayItem $w={22}><I w={12} h={7}><path d="M.5 6.500L6 1l5.500 5.500" fill="none" stroke="#fff" strokeWidth="1.200" /></I></TrayItem>
          <TrayItem $w={26}><I w={16} h={14}><path d="M4 0L0 2.800l4 2.800 4-2.800zM12 0L8 2.800l4 2.800 4-2.800zM4 5.800L0 8.600l4 2.800 4-2.800zM12 5.800L8 8.600l4 2.800 4-2.800zM8 9.200l-4 2.800 4 2 4-2z" fill="#8b98a5" /></I></TrayItem>
          <TrayItem $w={24}><I w={14} h={14}><path d="M1 13.500C2 6 7 2 13 1.500M3.500 13.500C4.500 8 8 5 13 4.500M6 13.500c.8-3 3-5 6-5.500" fill="none" stroke="#c8ccd0" /><circle cx="10" cy="12" r="1.500" fill="#fff" /></I></TrayItem>
          <TrayItem $w={20}><I w={16} h={14}><path d="M.5 4.500h3L7.500 1v12L3.500 9.500h-3z" fill="none" stroke="#fff" /><path d="M9.500 5c1 1.200 1 3 0 4" fill="none" stroke="#fff" /><path d="M11.500 3c2 2.200 2 5.800 0 8M13.500 1.500c2.800 3 2.800 8 0 11" fill="none" stroke="#7a8794" /></I></TrayItem>
          <TrayItem $w={36} $pl={6}>DEU</TrayItem>
          <Clock>14:45<br />26.07.2020</Clock>
          <TrayItem $w={34}><I w={16} h={16}><path d="M.5.500h15v12H10L8 15l-2-2.500H.5z" fill="none" stroke="#fff" /></I></TrayItem>
          <TrayItem $w={16} $end><I w={5} h={40}><path d="M.5 0v40" stroke="#56636f" /></I></TrayItem>
        </Tray>
      </Taskbar>

      <Overlay width={1680} height={1050}>
        <g transform="translate(780 110) scale(.44643 .33333)">
          <path d={circlePath} fill="none" stroke="#000" strokeWidth="1" vectorEffect="non-scaling-stroke" />
        </g>
        <path d="M673 576H746V563L817 589L746 616V602H673Z" fill="#fff" stroke="#000" strokeWidth="5" strokeLinejoin="round" />
      </Overlay>
      <Note $x={673} $y={528}>keine Spaltenlinien??</Note>
      <Note $x={681} $y={624}>vorhanden ??</Note>
      <Note $x={1332} $y={256}>Spaltenschrift Inhalt hellgrau ??</Note>
    </Root>
  );
}
